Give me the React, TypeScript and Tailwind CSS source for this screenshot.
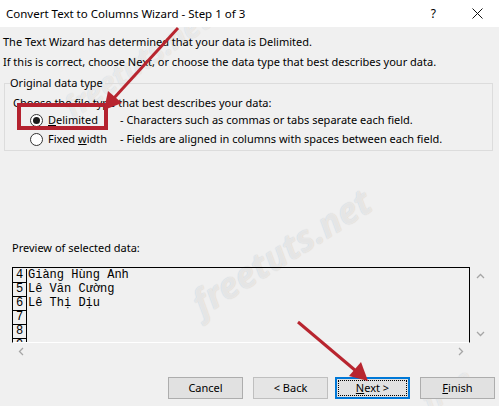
import React from "react";

const ui = "font-['Noto_Sans','Open_Sans',sans-serif]";
const mono = "font-['Liberation_Mono','Courier_New',monospace]";

function Radio({ checked }: { checked?: boolean }) {
  return (
    <span className="flex h-[13px] w-[13px] shrink-0 items-center justify-center rounded-full border border-[#333333] bg-white">
      {checked && <span className="h-[7px] w-[7px] rounded-full bg-[#1a1a1a]" />}
    </span>
  );
}

function Btn({
  children,
  className = "",
}: {
  children: React.ReactNode;
  className?: string;
}) {
  return (
    <div
      className={`flex h-[22px] w-[75px] items-center justify-center border border-[#adadad] bg-[#e1e1e1] text-[11px] text-black ${className}`}
    >
      {children}
    </div>
  );
}

const rows = ["Giàng Hùng Anh", "Lê Văn Cường", "Lê Thị Dịu", "", "", ""];

export default function App() {
  return (
    <div className={`relative isolate h-[406px] w-[499px] overflow-hidden bg-[#f0f0f0] text-black ${ui}`}>
      {/* ── watermark, kept behind the dialog text ────────────── */}
      <span className="pointer-events-none absolute -z-10 left-[52px] top-[40px] -rotate-[34deg] text-[30px] font-bold italic text-white/60 [text-shadow:0_0_1px_#c8c8c8]">
        freetuts.net
      </span>
      <span className="pointer-events-none absolute -z-10 left-[180px] top-[225px] -rotate-[32deg] text-[36px] font-bold italic text-white/60 [text-shadow:0_0_1px_#c0c0c0]">
        freetuts.net
      </span>
      <span className="pointer-events-none absolute -z-10 left-[420px] top-[368px] -rotate-[32deg] text-[28px] font-bold italic text-white/60 [text-shadow:0_0_1px_#c8c8c8]">
        free
      </span>

      {/* ── title bar ─────────────────────────────────────────── */}
      <div className="flex h-[27px] items-center bg-white pl-[6px]">
        <span className="text-[11.5px] leading-none">Convert Text to Columns Wizard - Step 1 of 3</span>
        <span className="ml-auto mr-[36px] text-[12px] leading-none">?</span>
        <svg width="11" height="11" viewBox="0 0 11 11" className="mr-[16px]">
          <path d="M0.5 0.5 L10.5 10.5 M10.5 0.5 L0.5 10.5" stroke="#111" strokeWidth="1" />
        </svg>
      </div>

      {/* ── intro ─────────────────────────────────────────────── */}
      <div className="mt-[5px] pl-[3px] text-[11px] leading-[20px]">
        <p>The Text Wizard has determined that your data is Delimited.</p>
        <p>If this is correct, choose Next, or choose the data type that best describes your data.</p>
      </div>

      {/* ── group box ─────────────────────────────────────────── */}
      <fieldset className="mt-[3px] ml-[4px] mr-[6px] border border-[#dcdcdc] px-[5px] pb-[1px] text-[11px]">
        <legend className="pr-[2px] leading-[16px]">Original data type</legend>
        <p className="pt-[4px] pl-[3px] leading-[16px]">
          Choose the file type that best describes your data:
        </p>
        <div className="flex h-[19px] items-center">
          <div className="ml-[20px] flex w-[90px] items-center gap-[5px]">
            <Radio checked />
            <span>
              <span className="underline">D</span>elimited
            </span>
          </div>
          <span>- Characters such as commas or tabs separate each field.</span>
        </div>
        <div className="flex h-[19px] items-center">
          <div className="ml-[20px] flex w-[90px] items-center gap-[5px]">
            <Radio />
            <span>
              Fixed <span className="underline">w</span>idth
            </span>
          </div>
          <span>- Fields are aligned in columns with spaces between each field.</span>
        </div>
      </fieldset>

      {/* ── preview ───────────────────────────────────────────── */}
      <p className="mt-[89px] pl-[12px] text-[11px] leading-[16px]">Preview of selected data:</p>
      <div className="mt-[11px] ml-[12px] w-[478px]">
        <div className="flex">
          <div className="h-[76px] w-[458px] overflow-hidden border-t border-r border-l border-black border-b border-b-white pt-[1px]">
            {rows.map((r, i) => (
              <div key={i} className={`flex h-[14px] text-[12px] leading-[13px] ${mono}`}>
                <span className="w-[14px] shrink-0 border-r border-b border-black text-center">{i + 4}</span>
                <span className="pl-[1px] whitespace-pre">{r}</span>
              </div>
            ))}
          </div>
          <div className="flex w-[20px] flex-col items-center justify-between py-[6px] text-[#a6a6a6]">
            <svg width="9" height="6" viewBox="0 0 9 6">
              <path d="M1 5 L4.5 1.5 L8 5" fill="none" stroke="currentColor" strokeWidth="1.3" />
            </svg>
            <svg width="9" height="6" viewBox="0 0 9 6">
              <path d="M1 1 L4.5 4.5 L8 1" fill="none" stroke="currentColor" strokeWidth="1.3" />
            </svg>
          </div>
        </div>
        <div className="flex h-[17px] w-[458px] items-center justify-between px-[6px] text-[#a6a6a6]">
          <svg width="6" height="9" viewBox="0 0 6 9">
            <path d="M5 1 L1.5 4.5 L5 8" fill="none" stroke="currentColor" strokeWidth="1.3" />
          </svg>
          <svg width="6" height="9" viewBox="0 0 6 9">
            <path d="M1 1 L4.5 4.5 L1 8" fill="none" stroke="currentColor" strokeWidth="1.3" />
          </svg>
        </div>
      </div>

      {/* ── buttons ───────────────────────────────────────────── */}
      <div className="mt-[17px] flex pl-[168px]">
        <Btn>Cancel</Btn>
        <Btn className="ml-[10px] border-[#bfbfbf] bg-[#e5e5e5] text-[#a0a0a0]">&lt; Back</Btn>
        <div className="ml-[7px] flex h-[22px] w-[75px] items-center justify-center border-2 border-[#0078d7] bg-[#e1e1e1] p-[1px] text-[11px]">
          <div className="flex h-full w-full items-center justify-center border border-dotted border-black">
            <span>
              <span className="underline">N</span>ext &gt;
            </span>
          </div>
        </div>
        <Btn className="ml-[10px]">
          <span>
            <span className="underline">F</span>inish
          </span>
        </Btn>
      </div>

      {/* ── annotations over the screenshot ───────────────────── */}
      <div className="pointer-events-none absolute left-[17px] top-[103px] h-[27px] w-[91px] border-4 border-[#b4222f]" />
      <svg className="pointer-events-none absolute inset-0" width="499" height="406" viewBox="0 0 499 406">
        <line x1="178" y1="28" x2="114" y2="98" stroke="#b8252f" strokeWidth="3" />
        <polygon points="104,110 108,91 122,103" fill="#b8252f" />
        <line x1="298" y1="322" x2="356" y2="371" stroke="#b8252f" strokeWidth="3" />
        <polygon points="368,381 349,376 361,362" fill="#b8252f" />
      </svg>
    </div>
  );
}
